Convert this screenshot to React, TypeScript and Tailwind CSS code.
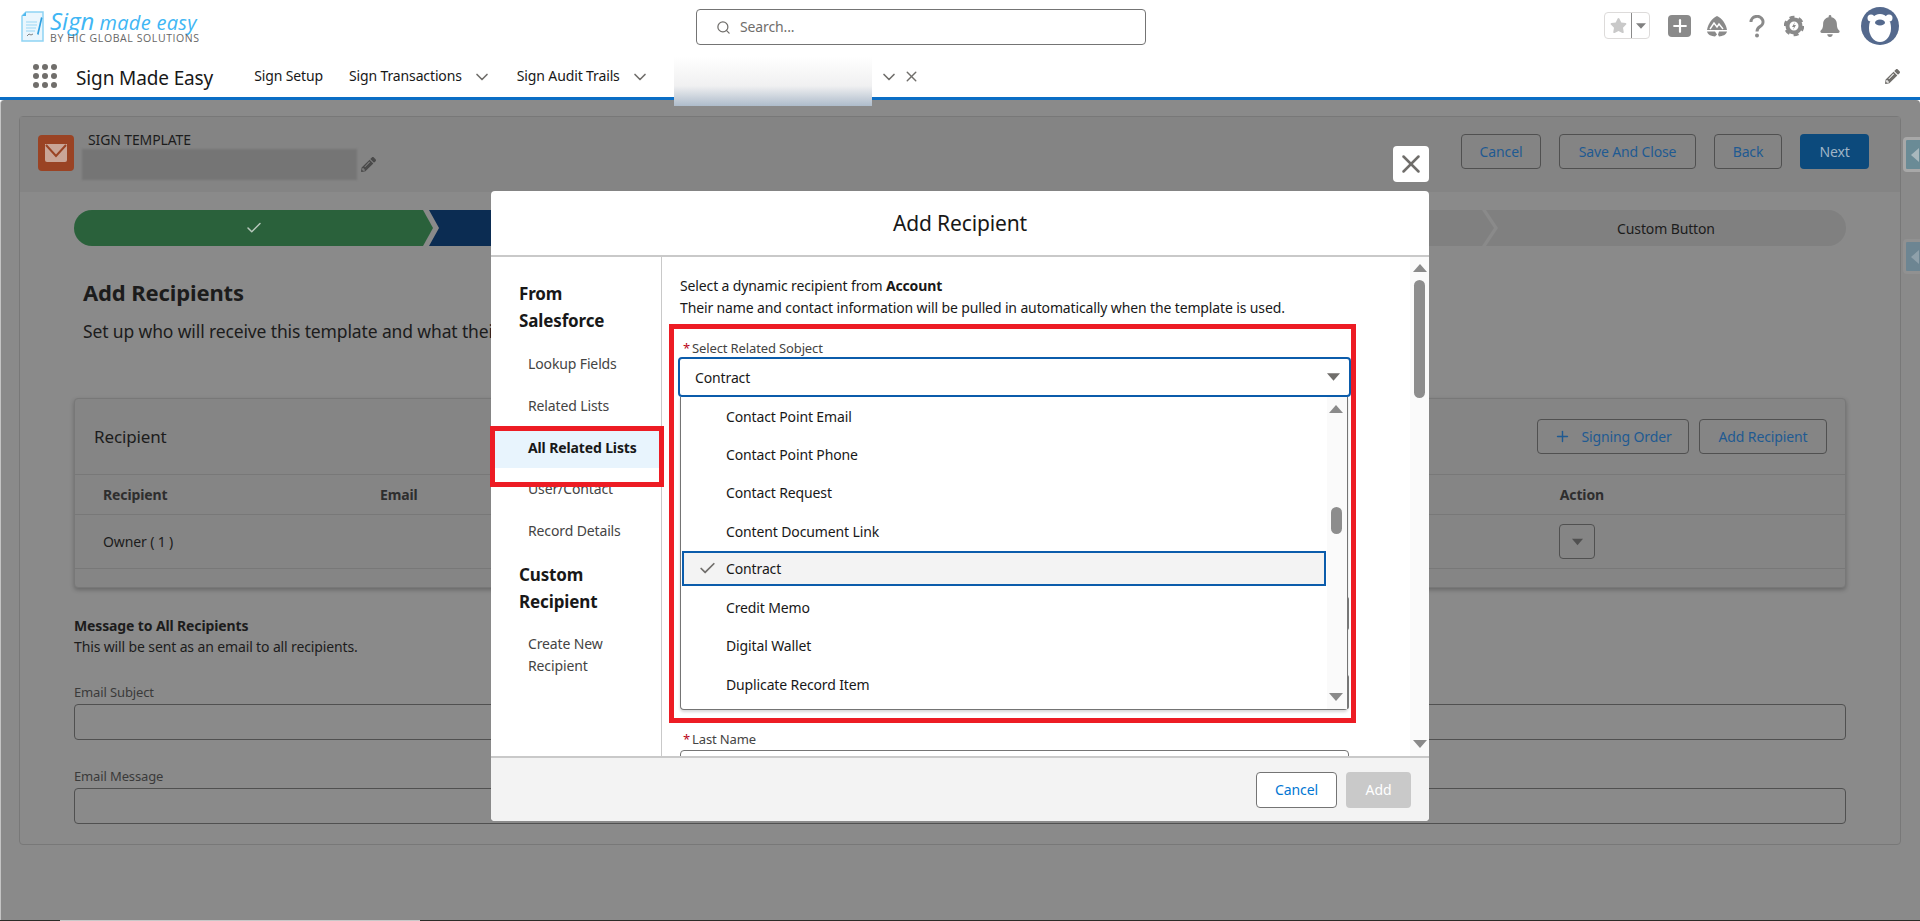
import { Check, ChevronDown, Plus, Search, X } from "lucide-react";
import { FaBell, FaPencilAlt, FaStar } from "react-icons/fa";

const blue = "text-[#1f5a92]";

function Caret({ className = "" }: { className?: string }) {
  return (
    <svg width="14" height="8" viewBox="0 0 14 8" className={className}>
      <path d="M0 0h14L7 8z" fill="currentColor" />
    </svg>
  );
}

function Logo() {
  return (
    <div className="flex items-center ml-[21px] mt-[9px] h-[35px]">
      <svg width="24" height="31" viewBox="0 0 24 31">
        <path d="M5 1h17v29H1V5z" fill="#eaf6fd" stroke="#8fd3f4" strokeWidth="1.5" />
        <path d="M5 1v4H1z" fill="#4db8ee" />
        <path d="M5 11h11M5 14h11M5 17h10M5 20h9" stroke="#9ad7f5" strokeWidth="1" />
        <path d="M20 6l-4 17 1.5 1 4-17z" fill="#2f9fe0" />
        <path d="M6 25l2-2 2 1 2-1" stroke="#666" strokeWidth="0.8" fill="none" />
      </svg>
      <div className="ml-[5px] flex flex-col">
        <div className="h-[24px] leading-[24px] italic text-[#40b6f4] whitespace-nowrap [font-family:'Open_Sans',sans-serif] tracking-normal">
          <span className="text-[24px] font-medium">Sign</span>
          <span className="text-[20px] ml-[5px] tracking-[0.3px]">made easy</span>
        </div>
        <div className="text-[10.5px] leading-[11px] text-[#666] tracking-[0.6px] whitespace-nowrap [font-family:'Open_Sans',sans-serif]">
          BY HIC GLOBAL SOLUTIONS
        </div>
      </div>
    </div>
  );
}

function TopIcons() {
  return (
    <div className="flex items-center ml-auto mr-[21px]">
      <div className="flex h-[27px] w-[46px] rounded border border-[#dddbda] mt-[-1px]">
        <div className="w-[26px] flex items-center justify-center text-[#c9c9c9]">
          <FaStar size={17} />
        </div>
        <div className="flex-1 flex items-center justify-center border-l border-[#8a8a8a] text-[#808080] rounded-r">
          <Caret className="w-[10px]" />
        </div>
      </div>
      <div className="ml-[18px] w-[23px] h-[22px] rounded bg-[#8a8a8a] flex items-center justify-center text-white">
        <Plus size={20} strokeWidth={2.6} />
      </div>
      <svg width="22" height="22" viewBox="0 0 22 22" className="ml-[15px]">
        <path d="M11 1C6 3 2 9 1 15h20C20 9 16 3 11 1z" fill="#8a8a8a" />
        <path d="M4 14l4-6 3 4 2-3 4 5" fill="none" stroke="#fff" strokeWidth="1.4" />
        <path d="M1 16.5h8l2 3-2 2C5 21 2 20 1 16.5zM13 16.5h8c-1 3.5-4 4.5-8 5l-1-2z" fill="#8a8a8a" />
      </svg>
      <svg width="18" height="23" viewBox="0 0 18 23" className="ml-[20px]">
        <path d="M3 7a6 5.5 0 1 1 9 4.6c-2 1.3-3 2.4-3 5" fill="none" stroke="#8a8a8a" strokeWidth="3" />
        <circle cx="9" cy="20.5" r="2" fill="#8a8a8a" />
      </svg>
      <svg width="20" height="22" viewBox="0 0 20 22" className="ml-[18px]">
        <circle cx="10" cy="11" r="6.5" fill="none" stroke="#8a8a8a" strokeWidth="4" />
        <circle cx="10" cy="11" r="9" fill="none" stroke="#8a8a8a" strokeWidth="2.5" strokeDasharray="5 4.4" />
        <path d="M11 7l-3 5h2l-1 3 3-5h-2z" fill="#8a8a8a" />
      </svg>
      <div className="ml-[15px] text-[#8a8a8a]">
        <FaBell size={22} />
      </div>
      <svg width="38" height="38" viewBox="0 0 38 38" className="ml-[20px]">
        <circle cx="19" cy="19" r="19" fill="#54698d" />
        <circle cx="10" cy="11" r="3.5" fill="#fff" />
        <circle cx="28" cy="11" r="3.5" fill="#fff" />
        <ellipse cx="19" cy="21" rx="11" ry="14" fill="#fff" />
        <ellipse cx="19" cy="15.5" rx="5" ry="3" fill="#54698d" />
      </svg>
    </div>
  );
}

function Header() {
  return (
    <div className="h-[52px] flex bg-white">
      <Logo />
      <div className="absolute left-[696px] top-[9px] w-[450px] h-[36px] rounded border border-[#747474] flex items-center pl-[19px] text-[#706e6b]">
        <Search size={15} />
        <span className="ml-[9px] text-[14px] -mt-[1px] text-[#706e6b]">Search...</span>
      </div>
      <TopIcons />
    </div>
  );
}

function NavBar() {
  return (
    <div className="h-[48px] flex items-center border-b-[3px] border-[#0b6ec5] bg-white relative">
      <div className="ml-[33px] mt-[2px] grid grid-cols-3 gap-[3px]">
        {Array.from({ length: 9 }).map((_, i) => (
          <span key={i} className="w-[6px] h-[6px] rounded-full bg-[#706e6b]" />
        ))}
      </div>
      <div className="ml-[19px] mr-[41px] mt-[8px] text-[19px] text-[#181818]">Sign Made Easy</div>
      <div className="flex items-center mt-[2px] text-[14px] text-[#181818]">
        <span className="mr-[26px]">Sign Setup</span>
        <span>Sign Transactions</span>
        <ChevronDown size={20} className="ml-[10px] mr-[25px] text-[#706e6b] mt-[3px]" />
        <span>Sign Audit Trails</span>
        <ChevronDown size={20} className="ml-[10px] mr-[24px] text-[#706e6b] mt-[3px]" />
      </div>
      <div className="self-start mt-[4px] w-[198px] h-[50px] relative z-10 bg-gradient-to-b from-white via-[#f0f0f1] via-60% to-[#aebccb] blur-[0.5px]" />
      <ChevronDown size={20} className="ml-[7px] mt-[4px] text-[#706e6b]" />
      <X size={17} className="ml-[4px] mt-[4px] text-[#706e6b]" />
      <FaPencilAlt size={15} className="ml-auto mr-[20px] mt-[4px] text-[#706e6b]" />
    </div>
  );
}

function OutlineBtn({ label, className = "" }: { label: string; className?: string }) {
  return (
    <div className={`h-[35px] rounded border border-[#505050] flex items-center justify-center text-[14px] ${blue} ${className}`}>
      {label}
    </div>
  );
}

function PagePath() {
  return (
    <div className="mt-[18px] mx-[54px] h-[36px] flex rounded-full overflow-hidden">
      <div className="w-[359px] shrink-0 bg-[#2a613b] flex items-center justify-center text-[#b8c8bc] [clip-path:polygon(0_0,calc(100%-10px)_0,100%_50%,calc(100%-10px)_100%,0_100%)]">
        <Check size={18} />
      </div>
      <div className="w-[500px] shrink-0 -ml-[4px] bg-[#0b2c52] [clip-path:polygon(0_0,calc(100%-10px)_0,100%_50%,calc(100%-10px)_100%,0_100%,10px_50%)]" />
      <div className="flex-1 -ml-[4px] bg-[#808080] [clip-path:polygon(0_0,calc(100%-12px)_0,100%_50%,calc(100%-12px)_100%,0_100%,12px_50%)]" />
      <div className="w-[360px] shrink-0 -ml-[8px] bg-[#808080] flex items-center justify-center text-[14px] text-[#1c1c1c] [clip-path:polygon(0_0,100%_0,100%_100%,0_100%,12px_50%)]">
        Custom Button
      </div>
    </div>
  );
}

function RecipientCard() {
  return (
    <div className="mt-[55px] mx-[54px] h-[190px] rounded border border-[#787878] shadow-[0_2px_4px_rgba(0,0,0,0.25)] flex flex-col bg-[#858585]">
      <div className="h-[76px] flex items-center pl-[19px] pr-[18px] border-b border-[#787878]">
        <span className="text-[17px] text-[#1c1c1c]">Recipient</span>
        <div className="ml-auto flex gap-[10px]">
          <div className={`w-[152px] h-[35px] rounded border border-[#505050] flex items-center justify-center text-[14px] ${blue}`}>
            <Plus size={17} className="mr-[10px]" />
            Signing Order
          </div>
          <OutlineBtn label="Add Recipient" className="w-[128px]" />
        </div>
      </div>
      <div className="h-[40px] flex items-center text-[14px] font-bold text-[#2e2e2e] border-b border-[#787878] pl-[28px]">
        <span className="w-[277px]">Recipient</span>
        <span>Email</span>
        <span className="ml-auto mr-[241px]">Action</span>
      </div>
      <div className="h-[54px] flex items-center text-[14px] text-[#1c1c1c] border-b border-[#787878] pl-[28px]">
        <span>Owner ( 1 )</span>
        <div className="ml-auto mr-[250px] w-[36px] h-[35px] rounded border border-[#505050] flex items-center justify-center text-[#505050]">
          <Caret className="w-[11px]" />
        </div>
      </div>
    </div>
  );
}

function Background() {
  return (
    <div className="relative h-[821px] bg-[#8a8a8a] border-l border-[#c4c4c4] rounded-t pt-[16px] overflow-hidden">
      <div className="ml-[18px] mr-[19px] h-[729px] rounded border border-[#787878]">
        <div className="h-[75px] bg-[#848484] flex items-center pl-[18px] pr-[31px]">
          <div className="w-[36px] h-[36px] -mt-[3px] rounded bg-[#9a4324] flex items-center justify-center">
            <svg width="24" height="20" viewBox="0 0 24 20">
              <path d="M1 1h22v16a2 2 0 0 1-2 2H3a2 2 0 0 1-2-2z" fill="#c9a597" />
              <path d="M2 2l10 11L22 2" fill="none" stroke="#9a4324" strokeWidth="2" />
            </svg>
          </div>
          <div className="ml-[8px] flex flex-col mt-[2px]">
            <div className="text-[14px] leading-[18px] text-[#1c1c1c] ml-[6px]">SIGN TEMPLATE</div>
            <div className="flex items-center">
              <div className="w-[275px] h-[31px] bg-[#757575] blur-[1px]" />
              <FaPencilAlt size={15} className="ml-[4px] text-[#4a4a4a]" />
            </div>
          </div>
          <div className="ml-auto -mt-[6px] flex gap-[18px]">
            <OutlineBtn label="Cancel" className="w-[80px]" />
            <OutlineBtn label="Save And Close" className="w-[137px]" />
            <OutlineBtn label="Back" className="w-[68px]" />
            <div className="w-[69px] h-[35px] rounded bg-[#0c4a7c] flex items-center justify-center text-[14px] text-[#9fb4c6]">
              Next
            </div>
          </div>
        </div>
        <PagePath />
        <div className="mt-[32px] ml-[63px] text-[22px] leading-[28px] font-bold text-[#1c1c1c]">Add Recipients</div>
        <div className="mt-[13px] ml-[63px] text-[17.5px] leading-[24px] text-[#1c1c1c]">
          Set up who will receive this template and what their role will be.
        </div>
        <RecipientCard />
        <div className="mx-[54px]">
          <div className="mt-[28px] text-[14px] leading-[20px] font-bold text-[#1c1c1c]">Message to All Recipients</div>
          <div className="mt-[1px] text-[14px] leading-[20px] text-[#1c1c1c]">This will be sent as an email to all recipients.</div>
          <div className="mt-[26px] text-[13px] leading-[18px] text-[#3a3a3a]">Email Subject</div>
          <div className="mt-[3px] h-[36px] rounded border border-[#505050]" />
          <div className="mt-[27px] text-[13px] leading-[18px] text-[#3a3a3a]">Email Message</div>
          <div className="mt-[3px] h-[36px] rounded border border-[#505050]" />
        </div>
      </div>
      {/* collapsed side tabs */}
      <div className="absolute right-0 top-[37px] w-[17px] h-[35px] rounded-l border-[3px] border-r-0 border-[#a8a8a8] bg-[#6a8b96] flex items-center justify-end text-[#a9b8bd] pr-[1px]">
        <span className="border-y-[7px] border-y-transparent border-r-[8px] border-r-current" />
      </div>
      <div className="absolute right-0 top-[139px] w-[17px] h-[35px] rounded-l border-[3px] border-r-0 border-[#919191] bg-[#6d8592] flex items-center justify-end text-[#8fa0aa] pr-[1px]">
        <span className="border-y-[7px] border-y-transparent border-r-[8px] border-r-current" />
      </div>
    </div>
  );
}

function SideItem({ children, active = false }: { children: React.ReactNode; active?: boolean }) {
  return (
    <div
      className={
        active
          ? "pl-[33px] pr-[20px] py-[10px] text-[14px] leading-[21px] font-bold text-[#181818] bg-[#e8f4fd] border-l-4 border-[#0b6ec5]"
          : "pl-[37px] pr-[20px] py-[10px] text-[14px] leading-[22px] text-[#444444]"
      }
    >
      {children}
    </div>
  );
}

function SideHeading({ children }: { children: React.ReactNode }) {
  return <div className="pl-[28px] pr-[30px] text-[17px] leading-[27px] font-bold text-[#181818]">{children}</div>;
}

function Sidebar() {
  return (
    <div className="w-[171px] shrink-0 border-r border-[#c9c9c9] pt-[23px]">
      <SideHeading>From Salesforce</SideHeading>
      <div className="h-[9px]" />
      <SideItem>Lookup Fields</SideItem>
      <SideItem>Related Lists</SideItem>
      <SideItem active>All Related Lists</SideItem>
      <SideItem>User/Contact</SideItem>
      <SideItem>Record Details</SideItem>
      <div className="h-[9px]" />
      <SideHeading>Custom Recipient</SideHeading>
      <div className="h-[8px]" />
      <SideItem>Create New Recipient</SideItem>
    </div>
  );
}

const objects = [
  "Contact Point Email",
  "Contact Point Phone",
  "Contact Request",
  "Content Document Link",
  "Contract",
  "Credit Memo",
  "Digital Wallet",
  "Duplicate Record Item",
];

function Dropdown() {
  return (
    <div className="absolute left-0 top-full mt-[2px] w-[668px] h-[313px] rounded-b border border-[#747474] border-t-0 bg-white shadow-[0_2px_3px_rgba(0,0,0,0.16)] flex z-10">
      <div className="flex-1">
        {objects.map((name) => (
          <div key={name} className="h-[38.3px] flex items-center text-[14px] text-[#181818]">
            {name === "Contract" ? (
              <div className="flex items-center w-full h-[35px] ml-[1px] -mt-[2px] border-2 border-[#0b5cab] bg-[#f3f3f3]">
                <Check size={19} strokeWidth={2.2} className="ml-[14px] mr-[9px] text-[#706e6b]" />
                {name}
              </div>
            ) : (
              <span className="ml-[45px]">{name}</span>
            )}
          </div>
        ))}
      </div>
      <div className="w-[20px] ml-[1px] bg-[#fafafa] relative">
        <Caret className="absolute left-[2px] top-[8px] rotate-180 text-[#8a8a8a]" />
        <div className="absolute left-[4px] top-[110px] w-[11px] h-[27px] rounded-full bg-[#8d8d8d]" />
        <Caret className="absolute left-[2px] bottom-[8px] text-[#8a8a8a]" />
      </div>
      <div className="absolute -right-[2px] top-[200px] w-[2px] h-[33px] rounded-r bg-[#777]" />
      <div className="absolute -right-[2px] top-[278px] w-[2px] h-[34px] rounded-r bg-[#777]" />
    </div>
  );
}

function ModalBody() {
  return (
    <div className="relative flex-1 min-w-0 pl-[18px] pt-[18px] overflow-hidden">
      <div className="text-[14px] leading-[22px] text-[#181818]">
        Select a dynamic recipient from <b>Account</b>
        <br />
        Their name and contact information will be pulled in automatically when the template is used.
      </div>
      <div className="mt-[20px] text-[13px] leading-[18px] text-[#444444]">
        <span className="text-[#ba0517] ml-[3px] mr-[2px]">*</span>Select Related Sobject
      </div>
      <div className="relative -ml-[2px] w-[673px] h-[40px] rounded border-2 border-[#0b5cab] flex items-center pl-[15px] pr-[9px] text-[14px] text-[#181818]">
        Contract
        <Caret className="ml-auto text-[#706e6b] w-[13px]" />
        <Dropdown />
      </div>
      <div className="mt-[333px] text-[13px] leading-[18px] text-[#444444]">
        <span className="text-[#ba0517] ml-[3px] mr-[2px]">*</span>Last Name
      </div>
      <div className="mt-[2px] w-[669px] h-[36px] rounded border border-[#747474]" />
      <div className="absolute right-0 top-0 bottom-0 w-[19px] bg-[#fafafa]">
        <Caret className="absolute left-[3px] top-[7px] rotate-180 text-[#8a8a8a]" />
        <div className="absolute left-[4px] top-[23px] w-[11px] h-[118px] rounded-full bg-[#8d8d8d]" />
        <Caret className="absolute left-[3px] bottom-[8px] text-[#8a8a8a]" />
      </div>
    </div>
  );
}

function Modal() {
  return (
    <div className="absolute left-[491px] top-[191px] w-[938px] h-[630px] rounded bg-white flex flex-col overflow-hidden">
      <div className="h-[66px] shrink-0 pt-[2px] border-b-2 border-[#c9c9c9] flex items-center justify-center text-[21px] text-[#181818]">
        Add Recipient
      </div>
      <div className="flex flex-1 min-h-0">
        <Sidebar />
        <ModalBody />
      </div>
      <div className="h-[65px] shrink-0 border-t-2 border-[#c9c9c9] bg-[#f3f3f3] flex items-center justify-end gap-[9px] pr-[18px]">
        <div className="w-[81px] h-[36px] rounded border border-[#747474] bg-white flex items-center justify-center text-[14px] text-[#0176d3]">
          Cancel
        </div>
        <div className="w-[65px] h-[36px] rounded bg-[#c9c9c9] flex items-center justify-center text-[14px] text-white">
          Add
        </div>
      </div>
    </div>
  );
}

export default function App() {
  return (
    <div className="relative w-[1920px] h-[921px] overflow-hidden bg-white tracking-[-0.13px] [font-family:'Noto_Sans',sans-serif]">
      <Header />
      <NavBar />
      <Background />
      <div className="absolute left-0 right-0 bottom-0 h-[1px] flex">
        <div className="w-[60px] bg-[#2c2c28]" />
        <div className="w-[360px] bg-[#c8c8c8]" />
        <div className="flex-1 bg-[#2c2c28]" />
      </div>
      <Modal />
      <div className="absolute left-[1393px] top-[146px] w-[36px] h-[36px] rounded bg-white flex items-center justify-center text-[#706e6b]">
        <X size={30} strokeWidth={2} />
      </div>
      {/* red callouts from the original screenshot */}
      <div className="absolute left-[490px] top-[426px] w-[174px] h-[61px] border-[5px] border-[#ed1c24]" />
      <div className="absolute left-[669px] top-[324px] w-[687px] h-[399px] border-[5px] border-[#ed1c24]" />
    </div>
  );
}
